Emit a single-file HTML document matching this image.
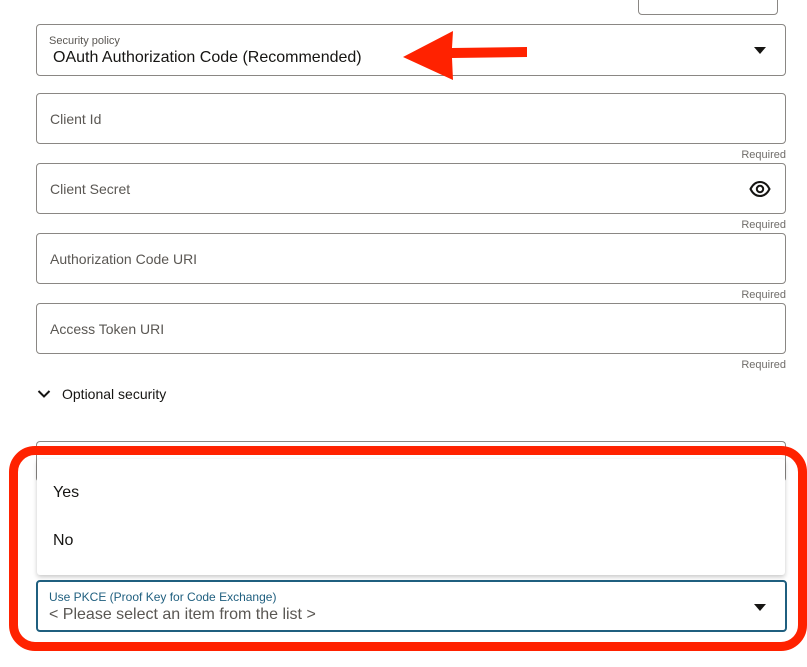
<!DOCTYPE html>
<html><head><style>
body{margin:0;width:807px;height:667px;background:#fff;font-family:"Liberation Sans",sans-serif;position:relative;overflow:hidden;color:#161513}
.f{position:absolute;left:36px;width:748px;height:49px;border:1px solid #8a8784;border-radius:4px;box-sizing:content-box}
.lbl{position:absolute;left:13px;top:17px;font-size:14px;color:#5a5753}
.req{position:absolute;right:21px;font-size:11px;color:#6f6c69}
.tri{position:absolute;width:0;height:0;border-left:6px solid transparent;border-right:6px solid transparent;border-top:7px solid #161513}
</style></head><body>
<div style="position:absolute;left:638px;top:-5px;width:138px;height:18px;border:1px solid #8a8784;border-radius:4px"></div>
<div class="f" style="top:24px;height:50px">
 <div style="position:absolute;left:12px;top:10px;font-size:11px;color:#5a5753">Security policy</div>
 <div style="position:absolute;left:16px;top:24px;font-size:16px">OAuth Authorization Code (Recommended)</div>
 <div class="tri" style="left:717px;top:22px"></div>
</div>
<div class="f" style="top:93px"><div class="lbl">Client Id</div></div>
<div class="req" style="top:149px">Required</div>
<div class="f" style="top:163px"><div class="lbl">Client Secret</div>
<svg style="position:absolute;left:712px;top:15px" width="22" height="20" viewBox="0 0 22 20"><path d="M1.5 10C4 5 7.5 3 11 3s7 2 9.5 7c-2.5 5-6 7-9.5 7s-7-2-9.5-7z" fill="none" stroke="#161513" stroke-width="2"/><circle cx="11" cy="10" r="3.2" fill="none" stroke="#161513" stroke-width="2"/></svg></div>
<div class="req" style="top:219px">Required</div>
<div class="f" style="top:233px"><div class="lbl">Authorization Code URI</div></div>
<div class="req" style="top:289px">Required</div>
<div class="f" style="top:303px"><div class="lbl">Access Token URI</div></div>
<div class="req" style="top:359px">Required</div>
<svg style="position:absolute;left:37px;top:389px" width="14" height="10" viewBox="0 0 14 10"><path d="M1.5 2l5.5 5.5L12.5 2" fill="none" stroke="#161513" stroke-width="2"/></svg>
<div style="position:absolute;left:62px;top:386px;font-size:14px">Optional security</div>
<div class="f" style="top:441px;height:40px;border-bottom:none"></div>
<div style="position:absolute;left:37px;top:459px;width:748px;height:116px;background:#fff;box-shadow:0 2px 5px rgba(0,0,0,.22);border-radius:3px">
 <div style="position:absolute;left:16px;top:25px;font-size:16px">Yes</div>
 <div style="position:absolute;left:16px;top:73px;font-size:16px">No</div>
</div>
<div style="position:absolute;left:36px;top:580px;width:747px;height:48px;border:2px solid #1f5f7f;border-radius:4px">
 <div style="position:absolute;left:11px;top:8px;font-size:12px;color:#1f5f7f">Use PKCE (Proof Key for Code Exchange)</div>
 <div style="position:absolute;left:11px;top:24px;font-size:16px;color:#5a5753">&lt; Please select an item from the list &gt;</div>
 <div class="tri" style="left:716px;top:22px"></div>
</div>
<div style="position:absolute;left:9px;top:446px;width:780px;height:187px;border:9px solid #ff2200;border-radius:26px"></div>
<svg style="position:absolute;left:0;top:0" width="807" height="100"><polygon points="403,57 453,31 452,48 527,47 527,57 452,58 453,80" fill="#ff2200"/></svg>
</body></html>
